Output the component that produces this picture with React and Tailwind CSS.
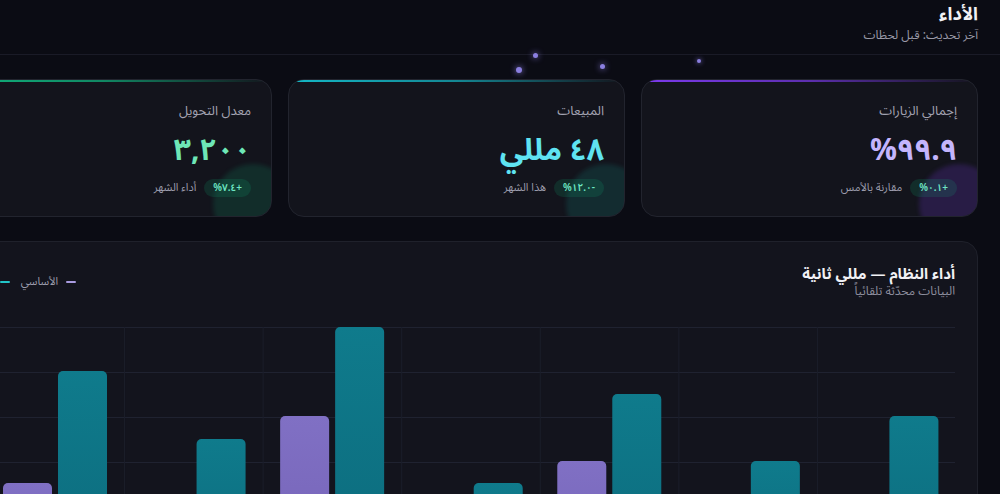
const stats = [
  {
    label: 'إجمالي الزيارات',
    value: '٩٩.٩%',
    delta: '+٠.١%',
    note: 'مقارنة بالأمس',
    valueColor: 'text-[#c4b5fd]',
    line: 'from-[#7c3aed] via-[#7c3aed]/70',
    glow: 'bg-[#7c3aed]/20',
  },
  {
    label: 'المبيعات',
    value: '٤٨ مللي',
    delta: '-١٢.٠%',
    note: 'هذا الشهر',
    valueColor: 'text-[#5fe3f2]',
    line: 'from-[#14b8c6] via-[#14b8c6]/70',
    glow: 'bg-[#14b8a6]/15',
  },
  {
    label: 'معدل التحويل',
    value: '٣,٢٠٠',
    delta: '+٧.٤%',
    note: 'أداء الشهر',
    valueColor: 'text-[#6ee7b7]',
    line: 'from-[#10b981] via-[#10b981]/70',
    glow: 'bg-[#10b981]/15',
  },
];

// columns left -> right on screen, tops in chart px (baseline 225)
const columns = [
  { base: 156, cur: 44 },
  { base: 185, cur: 112 },
  { base: 89, cur: 0 },
  { base: 200, cur: 156 },
  { base: 134, cur: 67 },
  { base: 190, cur: 134 },
  { base: 175, cur: 89 },
];

const COL_W = 138.57;
const START = 28;

const StatCard = ({ s }) => (
  <div className="relative overflow-hidden rounded-2xl border border-[#22242e] bg-[#13141c] px-5 pt-[21px] pb-[19px]">
    <div className={`absolute top-0 inset-x-0 h-[2px] bg-linear-to-r ${s.line} to-transparent`} />
    <div className={`absolute -right-[22px] -bottom-[28px] w-20 h-20 rounded-full blur-[2px] ${s.glow}`} />
    <div className="relative">
      <p className="text-[13px] leading-5 text-[#a3a3b2]">{s.label}</p>
      <p className={`mt-3 text-[30px] font-bold leading-9 tracking-[-0.5px] ${s.valueColor}`}>{s.value}</p>
      <div className="mt-2.5 flex items-center gap-2">
        <span className="h-[18px] px-[9px] rounded-full bg-[#10b981]/15 text-[10px] font-semibold leading-[18px] text-[#6ee7c4]">{s.delta}</span>
        <span className="text-[11px] text-[#9b9bab]">{s.note}</span>
      </div>
    </div>
  </div>
);

const Chart = () => (
  <svg viewBox="0 0 997 226" className="block w-full h-[226px]">
    <defs>
      <linearGradient id="teal" x1="0" y1="0" x2="0" y2="1">
        <stop offset="0%" stopColor="#0f7b8c" />
        <stop offset="100%" stopColor="#0c6a7c" />
      </linearGradient>
      <linearGradient id="violet" x1="0" y1="0" x2="0" y2="1">
        <stop offset="0%" stopColor="#8070c4" />
        <stop offset="100%" stopColor="#7462b6" />
      </linearGradient>
    </defs>
    {[0, 45, 90, 135, 180].map((y) => (
      <line key={y} x1={START} x2={997} y1={y + 0.5} y2={y + 0.5} stroke="#1f2230" strokeWidth="1" />
    ))}
    {[0, 1, 2, 3, 4, 5, 6].map((i) => (
      <line key={i} x1={START + i * COL_W} x2={START + i * COL_W} y1={0} y2={226} stroke="#1b1e2a" strokeWidth="1" />
    ))}
    {columns.map((c, i) => {
      const left = START + i * COL_W;
      return (
        <g key={i}>
          <rect x={left + 17} y={c.base} width={49} height={260 - c.base} rx={5} fill="url(#violet)" />
          <rect x={left + 72} y={c.cur} width={49} height={260 - c.cur} rx={5} fill="url(#teal)" />
        </g>
      );
    })}
  </svg>
);

export default function App() {
  return (
    <div dir="rtl" className="min-h-screen w-full overflow-hidden bg-[#0b0c14] font-['Noto_Sans_Arabic','DejaVu_Sans',sans-serif] text-white">
      <div className="relative w-[1087px]">
        <header className="px-[22px] pt-[2px] pb-2 border-b border-[#1a1b27]">
          <h1 className="text-[18px] font-bold leading-6 text-[#f1f1f5]">الأداء</h1>
          <p className="text-[12px] leading-5 text-[#9a9aa8]">آخر تحديث: قبل لحظات</p>
        </header>

        {/* floating particles */}
        <span className="absolute right-[462px] top-[53px] w-[5px] h-[5px] rounded-full bg-[#8b7fe0] shadow-[0_0_6px_#8b7fe0]" />
        <span className="absolute right-[478px] top-[67px] w-[6px] h-[6px] rounded-full bg-[#8b7fe0] shadow-[0_0_6px_#8b7fe0]" />
        <span className="absolute right-[395px] top-[64px] w-[5px] h-[5px] rounded-full bg-[#8b7fe0] shadow-[0_0_6px_#8b7fe0]" />
        <span className="absolute right-[299px] top-[59px] w-[4px] h-[4px] rounded-full bg-[#8b7fe0] shadow-[0_0_5px_#8b7fe0]" />

        <main className="px-[22px] pt-6">
          <div className="grid grid-cols-3 gap-4">
            {stats.map((s) => (
              <StatCard key={s.label} s={s} />
            ))}
          </div>

          <section className="mt-6 rounded-2xl border border-[#1f212b] bg-[#13141d] px-[22px] pt-[22px] pb-6">
            <div className="flex items-center justify-between">
              <div>
                <h2 className="text-[15px] font-bold leading-5 text-[#f1f1f5]">أداء النظام — مللي ثانية</h2>
                <p className="text-[12px] leading-4 text-[#8e8e9e]">البيانات محدّثة تلقائياً</p>
              </div>
              <div className="flex items-center gap-[11px] pl-[7px] text-[11px] text-[#9b9bab]">
                <span className="flex items-center gap-2">
                  <span className="w-[10px] h-[2px] rounded-full bg-[#a99be0]" />
                  الأساسي
                </span>
                <span className="flex items-center gap-2">
                  <span className="w-[10px] h-[2px] rounded-full bg-[#22c4c8]" />
                  الحالي
                </span>
              </div>
            </div>
            <div className="mt-[27px]">
              <Chart />
            </div>
          </section>
        </main>
      </div>
    </div>
  );
}
